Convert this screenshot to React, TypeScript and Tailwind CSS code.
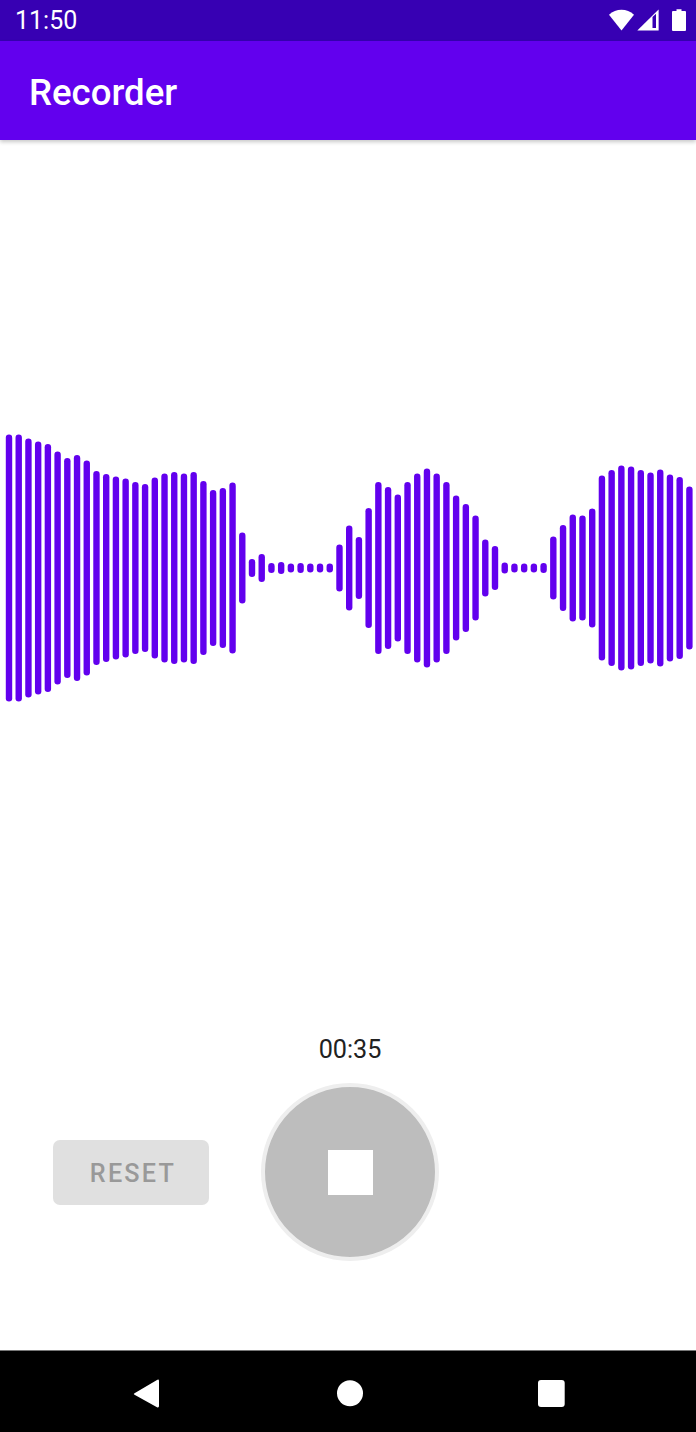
const BAR_HEIGHTS = [
  267, 267, 259, 253, 248, 233, 220, 226, 215, 194, 188, 183, 179, 172, 168, 181,
  189, 192, 189, 192, 174, 156, 160, 171, 71, 18, 28, 10, 12, 9, 10, 9, 9, 9,
  47, 85, 62, 120, 172, 162, 147, 172, 189, 199, 189, 172, 145, 128, 105, 57, 44,
  11, 9, 9, 9, 10, 63, 86, 107, 105, 119, 185, 196, 205, 203, 196, 191, 197, 187,
  182, 163,
]

function Waveform() {
  return (
    <svg width="696" height="280" viewBox="0 0 696 280" className="block shrink-0">
      {BAR_HEIGHTS.map((h, i) => (
        <rect
          key={i}
          x={9 + i * 9.72 - 3.2}
          y={140 - h / 2}
          width="6.4"
          height={h}
          rx="3.2"
          fill="#6200ee"
        />
      ))}
    </svg>
  )
}

function StatusIcons() {
  return (
    <svg width="80" height="23" viewBox="0 0 80 23" className="block">
      {/* wifi */}
      <path d="M3 5.8 C10 -0.9 21 -0.9 28 5.8 L15.5 21.5 Z" fill="#fff" />
      {/* signal */}
      <path d="M31.3 21.5 L52.6 0.5 V21.5 Z" fill="#fff" />
      <path d="M46.5 8 L50 4.8 V19 H46.5 Z" fill="#3700b3" />
      {/* battery */}
      <path d="M66 3 Q66 2 67 2 H70.5 V0.3 H75.5 V2 H79 Q80 2 80 3 V21 Q80 22 79 22 H67 Q66 22 66 21 Z" fill="#fff" />
    </svg>
  )
}

function NavBar() {
  return (
    <nav className="flex h-[82px] shrink-0 items-center border-t border-[#777777] bg-black">
      <svg width="696" height="81" viewBox="0 1 696 81" className="block">
        <path d="M134.5 43.3 L157 29.9 Q159 29 159 31 V56 Q159 58 157 57.2 L134.5 44.8 Q133 44 134.5 43.3 Z" fill="#fff" />
        <circle cx="350" cy="43.3" r="13" fill="#fff" />
        <rect x="538" y="30" width="26.7" height="27" rx="3" fill="#fff" />
      </svg>
    </nav>
  )
}

export default function App() {
  return (
    <div className="flex h-[1432px] w-[696px] flex-col overflow-hidden bg-white font-[Roboto,sans-serif]">
      <div className="flex h-[41px] shrink-0 items-center justify-between bg-[#3700b3] pl-[15px] pr-[10px]">
        <span className="text-[25px] leading-none text-white">11:50</span>
        <StatusIcons />
      </div>
      <header className="z-10 flex h-[99px] shrink-0 items-center bg-[#6200ee] pt-[5px] pl-[29px] shadow-[0_2px_4px_rgba(0,0,0,0.22)]">
        <h1 className="text-[36.6px] font-medium leading-none text-white">Recorder</h1>
      </header>

      <main className="flex min-h-0 flex-1 flex-col">
        <div className="flex h-[855px] shrink-0 items-center">
          <Waveform />
        </div>
        <div className="flex flex-col">
          <p className="mt-[40px] pl-[4px] text-center text-[25.2px] leading-[30px] text-[#212121]">00:35</p>
          <div className="mt-[18px] flex items-center gap-[52px] pl-[53px]">
            <button className="mt-[1px] h-[65px] w-[156px] rounded-[7px] bg-[#e0e0e0] pt-[3px] pl-[4px] text-[25.2px] font-medium tracking-[0.0892em] text-[#999999]">
              RESET
            </button>
            <button className="flex size-[178px] items-center justify-center rounded-full border-[4px] border-[#eeeeee] bg-[#bdbdbd]">
              <span className="block size-[45px] bg-white" />
            </button>
          </div>
        </div>
      </main>

      <NavBar />
    </div>
  )
}
